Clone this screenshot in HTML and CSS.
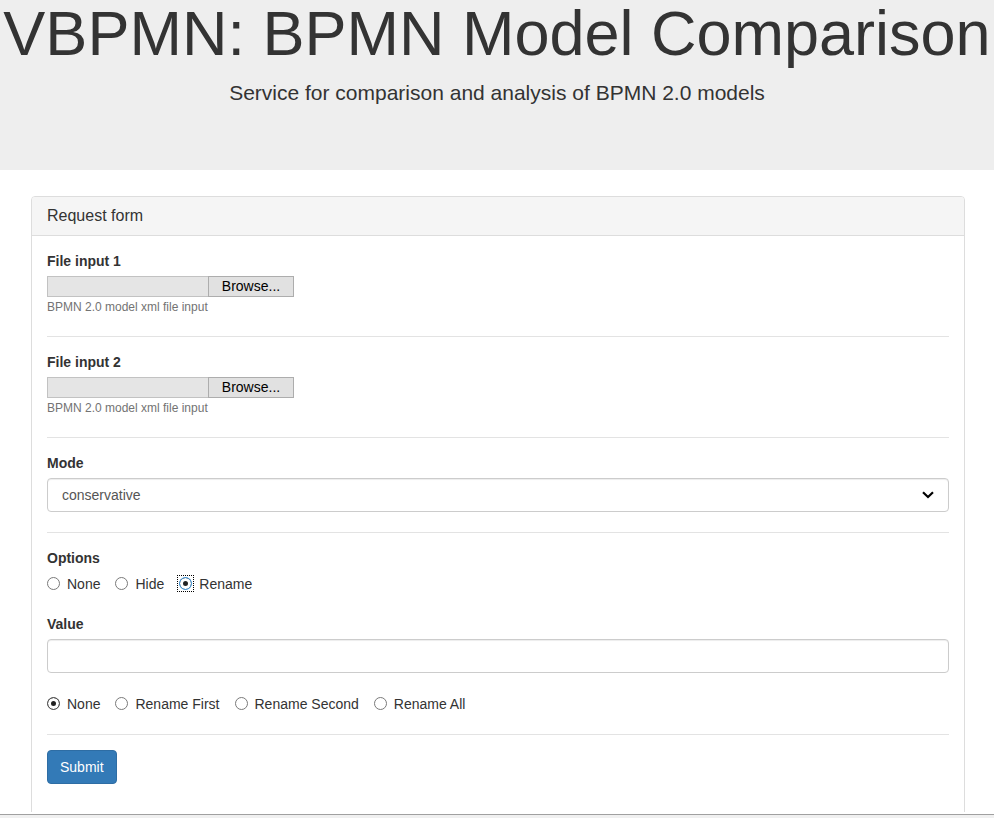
FILE: index.html
```html
<!DOCTYPE html>
<html lang="en">
<head>
<meta charset="utf-8">
<title>VBPMN: BPMN Model Comparison</title>
<link rel="stylesheet" href="styles.css">
</head>
<body>
<header class="jumbotron">
  <h1 class="title">VBPMN: BPMN Model Comparison</h1>
  <p class="lead">Service for comparison and analysis of BPMN 2.0 models</p>
</header>

<section class="panel">
  <div class="panel-heading">
    <h3 class="panel-title">Request form</h3>
  </div>
  <form class="panel-body">
    <div class="group">
      <label class="field-label">File input 1</label>
      <div class="file-input">
        <span class="file-name"></span>
        <button type="button" class="file-btn">Browse...</button>
      </div>
      <p class="help">BPMN 2.0 model xml file input</p>
    </div>
    <hr class="sep">
    <div class="group">
      <label class="field-label">File input 2</label>
      <div class="file-input">
        <span class="file-name"></span>
        <button type="button" class="file-btn">Browse...</button>
      </div>
      <p class="help">BPMN 2.0 model xml file input</p>
    </div>
    <hr class="sep">
    <div class="group">
      <label class="field-label">Mode</label>
      <div class="select-wrap">
        <select class="control select">
          <option>conservative</option>
        </select>
        <svg class="chevron" width="12" height="8" viewBox="0 0 12 8"><polyline points="1,1.2 6,6 11,1.2" fill="none" stroke="#000" stroke-width="2.2"/></svg>
      </div>
    </div>
    <hr class="sep">
    <div class="group">
      <label class="field-label">Options</label>
      <div class="radio-row first-row">
        <label class="radio-item"><input type="radio" name="opt" class="radio"><span>None</span></label>
        <label class="radio-item"><input type="radio" name="opt" class="radio"><span>Hide</span></label>
        <label class="radio-item"><span class="focus-ring"><input type="radio" name="opt" class="radio focused" checked></span><span>Rename</span></label>
      </div>
    </div>
    <div class="group value-group">
      <label class="field-label">Value</label>
      <input type="text" class="control">
    </div>
    <div class="radio-row second-row">
      <label class="radio-item"><input type="radio" name="ren" class="radio" checked><span>None</span></label>
      <label class="radio-item"><input type="radio" name="ren" class="radio"><span>Rename First</span></label>
      <label class="radio-item"><input type="radio" name="ren" class="radio"><span>Rename Second</span></label>
      <label class="radio-item"><input type="radio" name="ren" class="radio"><span>Rename All</span></label>
    </div>
    <hr class="sep">
    <button type="button" class="btn-primary">Submit</button>
  </form>
</section>

<div class="statusbar"></div>
</body>
</html>
```

FILE: styles.css
```css
html, body {
  margin: 0;
  padding: 0;
  background: #fff;
}

body {
  font-family: "Liberation Sans", Arial, Helvetica, sans-serif;
  font-size: 14px;
  line-height: 20px;
  color: #333;
  overflow: hidden;
}

.jumbotron {
  background: #eee;
  height: 170px;
  text-align: center;
}

.title {
  margin: 0;
  font-size: 63px;
  font-weight: 400;
  line-height: 66px;
  white-space: nowrap;
  color: #333;
}

.lead {
  margin: 12px 0 0;
  font-size: 21px;
  line-height: 30px;
  font-weight: 400;
  color: #333;
}

.panel {
  margin: 26px 0 0 31px;
  width: 934px;
  box-sizing: border-box;
  border: 1px solid #ddd;
  border-radius: 4px;
  background: #fff;
}

.panel-heading {
  background: #f5f5f5;
  border-bottom: 1px solid #ddd;
  border-radius: 3px 3px 0 0;
  padding: 10px 15px;
}

.panel-title {
  margin: 0;
  font-size: 16px;
  font-weight: 400;
  line-height: 1.1;
  color: #333;
}

.panel-body {
  display: block;
  padding: 15px 15px 40px;
}

.field-label {
  display: block;
  font-weight: 700;
  line-height: 20px;
  margin-bottom: 5px;
}

.file-input {
  display: flex;
  height: 21px;
}

.file-name {
  box-sizing: border-box;
  width: 161px;
  height: 21px;
  background: #e5e5e5;
  border: 1px solid #c2c2c2;
  border-right: none;
}

.file-btn {
  box-sizing: border-box;
  width: 86px;
  height: 21px;
  margin: 0;
  padding: 0;
  font-family: "Liberation Sans", Arial, sans-serif;
  font-size: 14px;
  line-height: 19px;
  color: #000;
  background: #e1e1e1;
  border: 1px solid #adadad;
  border-radius: 0;
}

.help {
  margin: 2px 0 0;
  font-size: 12px;
  line-height: 17px;
  color: #737373;
}

.sep {
  border: 0;
  border-top: 1px solid #e3e3e3;
  margin: 20px 0 15px;
  height: 0;
}

.control {
  display: block;
  box-sizing: border-box;
  width: 100%;
  height: 34px;
  margin: 0;
  padding: 6px 12px;
  font-family: "Liberation Sans", Arial, sans-serif;
  font-size: 14px;
  line-height: 20px;
  color: #555;
  background: #fff;
  border: 1px solid #ccc;
  border-radius: 4px;
  box-shadow: inset 0 1px 1px rgba(0, 0, 0, 0.075);
}

.select-wrap {
  position: relative;
}

.select {
  appearance: none;
  -webkit-appearance: none;
  padding-left: 14px;
}

.chevron {
  position: absolute;
  right: 15px;
  top: 13px;
  pointer-events: none;
}

.radio-row {
  display: flex;
  align-items: center;
  height: 20px;
}

.first-row {
  margin-top: 6px;
}

.value-group {
  margin-top: 20px;
}

.second-row {
  margin-top: 21px;
}

.radio-item {
  display: inline-flex;
  align-items: center;
  gap: 7px;
  margin-right: 15px;
  font-weight: 400;
  line-height: 20px;
  color: #333;
}

.radio {
  appearance: none;
  -webkit-appearance: none;
  box-sizing: border-box;
  width: 13px;
  height: 13px;
  margin: 0;
  border: 1px solid #7a7a7a;
  border-radius: 50%;
  background: #fff;
}

.radio:checked {
  background: #222;
  border-color: #555;
  box-shadow: inset 0 0 0 3px #fff;
}

.radio.focused {
  border-color: #3d97df;
}

.focus-ring {
  display: inline-flex;
  outline: 1px dotted #000;
  outline-offset: 1px;
}

.btn-primary {
  display: inline-block;
  box-sizing: border-box;
  height: 34px;
  margin: 0;
  padding: 6px 12px;
  font-family: "Liberation Sans", Arial, sans-serif;
  font-size: 14px;
  line-height: 20px;
  color: #fff;
  background: #337ab7;
  border: 1px solid #2e6da4;
  border-radius: 4px;
}

.statusbar {
  position: fixed;
  left: 0;
  right: 0;
  bottom: 0;
  height: 4px;
  box-sizing: border-box;
  background: #f0f0f0;
  border-top: 1px solid #a0a0a0;
  box-shadow: 0 -2px 0 #fff;
}
```
